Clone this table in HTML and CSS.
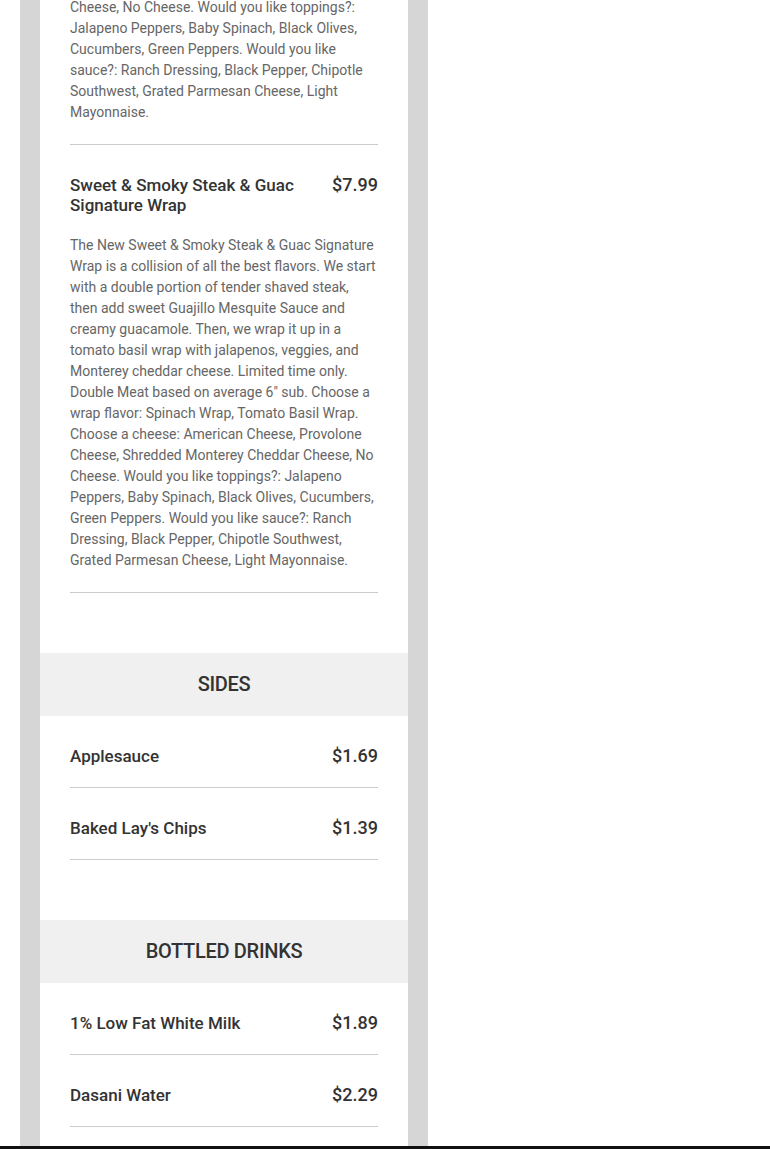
FILE: index.html
```html
<!DOCTYPE html>
<html>
<head>
<meta charset="utf-8">
<link rel="stylesheet" href="styles.css">
</head>
<body>
<div class="page">
  <div class="column">
    <div class="card">
      <section class="section first">
        <div class="item">
          <p class="desc">Cheese, No Cheese. Would you like toppings?: Jalapeno Peppers, Baby Spinach, Black Olives, Cucumbers, Green Peppers. Would you like sauce?: Ranch Dressing, Black Pepper, Chipotle Southwest, Grated Parmesan Cheese, Light Mayonnaise.</p>
        </div>
        <div class="item">
          <div class="head">
            <h3 class="name">Sweet &amp; Smoky Steak &amp; Guac Signature Wrap</h3>
            <span class="price">$7.99</span>
          </div>
          <p class="desc with-gap">The New Sweet &amp; Smoky Steak &amp; Guac Signature Wrap is a collision of all the best flavors. We start with a double portion of tender shaved steak, then add sweet Guajillo Mesquite Sauce and creamy guacamole. Then, we wrap it up in a tomato basil wrap with jalapenos, veggies, and Monterey cheddar cheese. Limited time only. Double Meat based on average 6" sub. Choose a wrap flavor: Spinach Wrap, Tomato Basil Wrap. Choose a cheese: American Cheese, Provolone Cheese, Shredded Monterey Cheddar Cheese, No Cheese. Would you like toppings?: Jalapeno Peppers, Baby Spinach, Black Olives, Cucumbers, Green Peppers. Would you like sauce?: Ranch Dressing, Black Pepper, Chipotle Southwest, Grated Parmesan Cheese, Light Mayonnaise.</p>
        </div>
      </section>
      <h2 class="band">SIDES</h2>
      <section class="section">
        <div class="item">
          <div class="head">
            <h3 class="name">Applesauce</h3>
            <span class="price">$1.69</span>
          </div>
        </div>
        <div class="item">
          <div class="head">
            <h3 class="name">Baked Lay's Chips</h3>
            <span class="price">$1.39</span>
          </div>
        </div>
      </section>
      <h2 class="band">BOTTLED DRINKS</h2>
      <section class="section">
        <div class="item">
          <div class="head">
            <h3 class="name">1% Low Fat White Milk</h3>
            <span class="price">$1.89</span>
          </div>
        </div>
        <div class="item">
          <div class="head">
            <h3 class="name">Dasani Water</h3>
            <span class="price">$2.29</span>
          </div>
        </div>
      </section>
    </div>
  </div>
</div>
<div class="bar"></div>
</body>
</html>
```

FILE: styles.css
```css
html, body {
  margin: 0;
  padding: 0;
  background: #ffffff;
  font-family: Roboto, "Liberation Sans", Arial, sans-serif;
}
.page {
  height: 1146px;
  overflow: hidden;
}
.column {
  width: 368px;
  margin-left: 20px;
  padding: 0 20px;
  background: #d6d6d6;
  min-height: 1146px;
}
.card {
  background: #ffffff;
  margin-top: -3px;
  min-height: 1160px;
}
.section {
  padding: 0 30px 60px;
}
.item {
  padding: 30px 0 21px;
  border-bottom: 1px solid #cccccc;
}
.section.first .item:first-child {
  padding-top: 0;
}
.head {
  display: flex;
  justify-content: space-between;
  align-items: flex-start;
  gap: 30px;
}
.name {
  margin: 0;
  font-size: 17px;
  line-height: 20px;
  font-weight: 500;
  color: #333333;
  max-width: 240px;
}
.price {
  font-size: 18px;
  line-height: 20px;
  font-weight: 500;
  color: #333333;
  white-space: nowrap;
}
.desc {
  margin: 0;
  font-size: 14px;
  line-height: 21px;
  color: #666666;
}
.desc.with-gap {
  margin-top: 20px;
}
.band {
  margin: 0;
  background: #f0f0f0;
  text-align: center;
  font-size: 20px;
  line-height: 23px;
  font-weight: 500;
  color: #333333;
  padding: 20px 0;
  letter-spacing: -0.3px;
}
.bar {
  height: 3px;
  background: #111111;
}
```
